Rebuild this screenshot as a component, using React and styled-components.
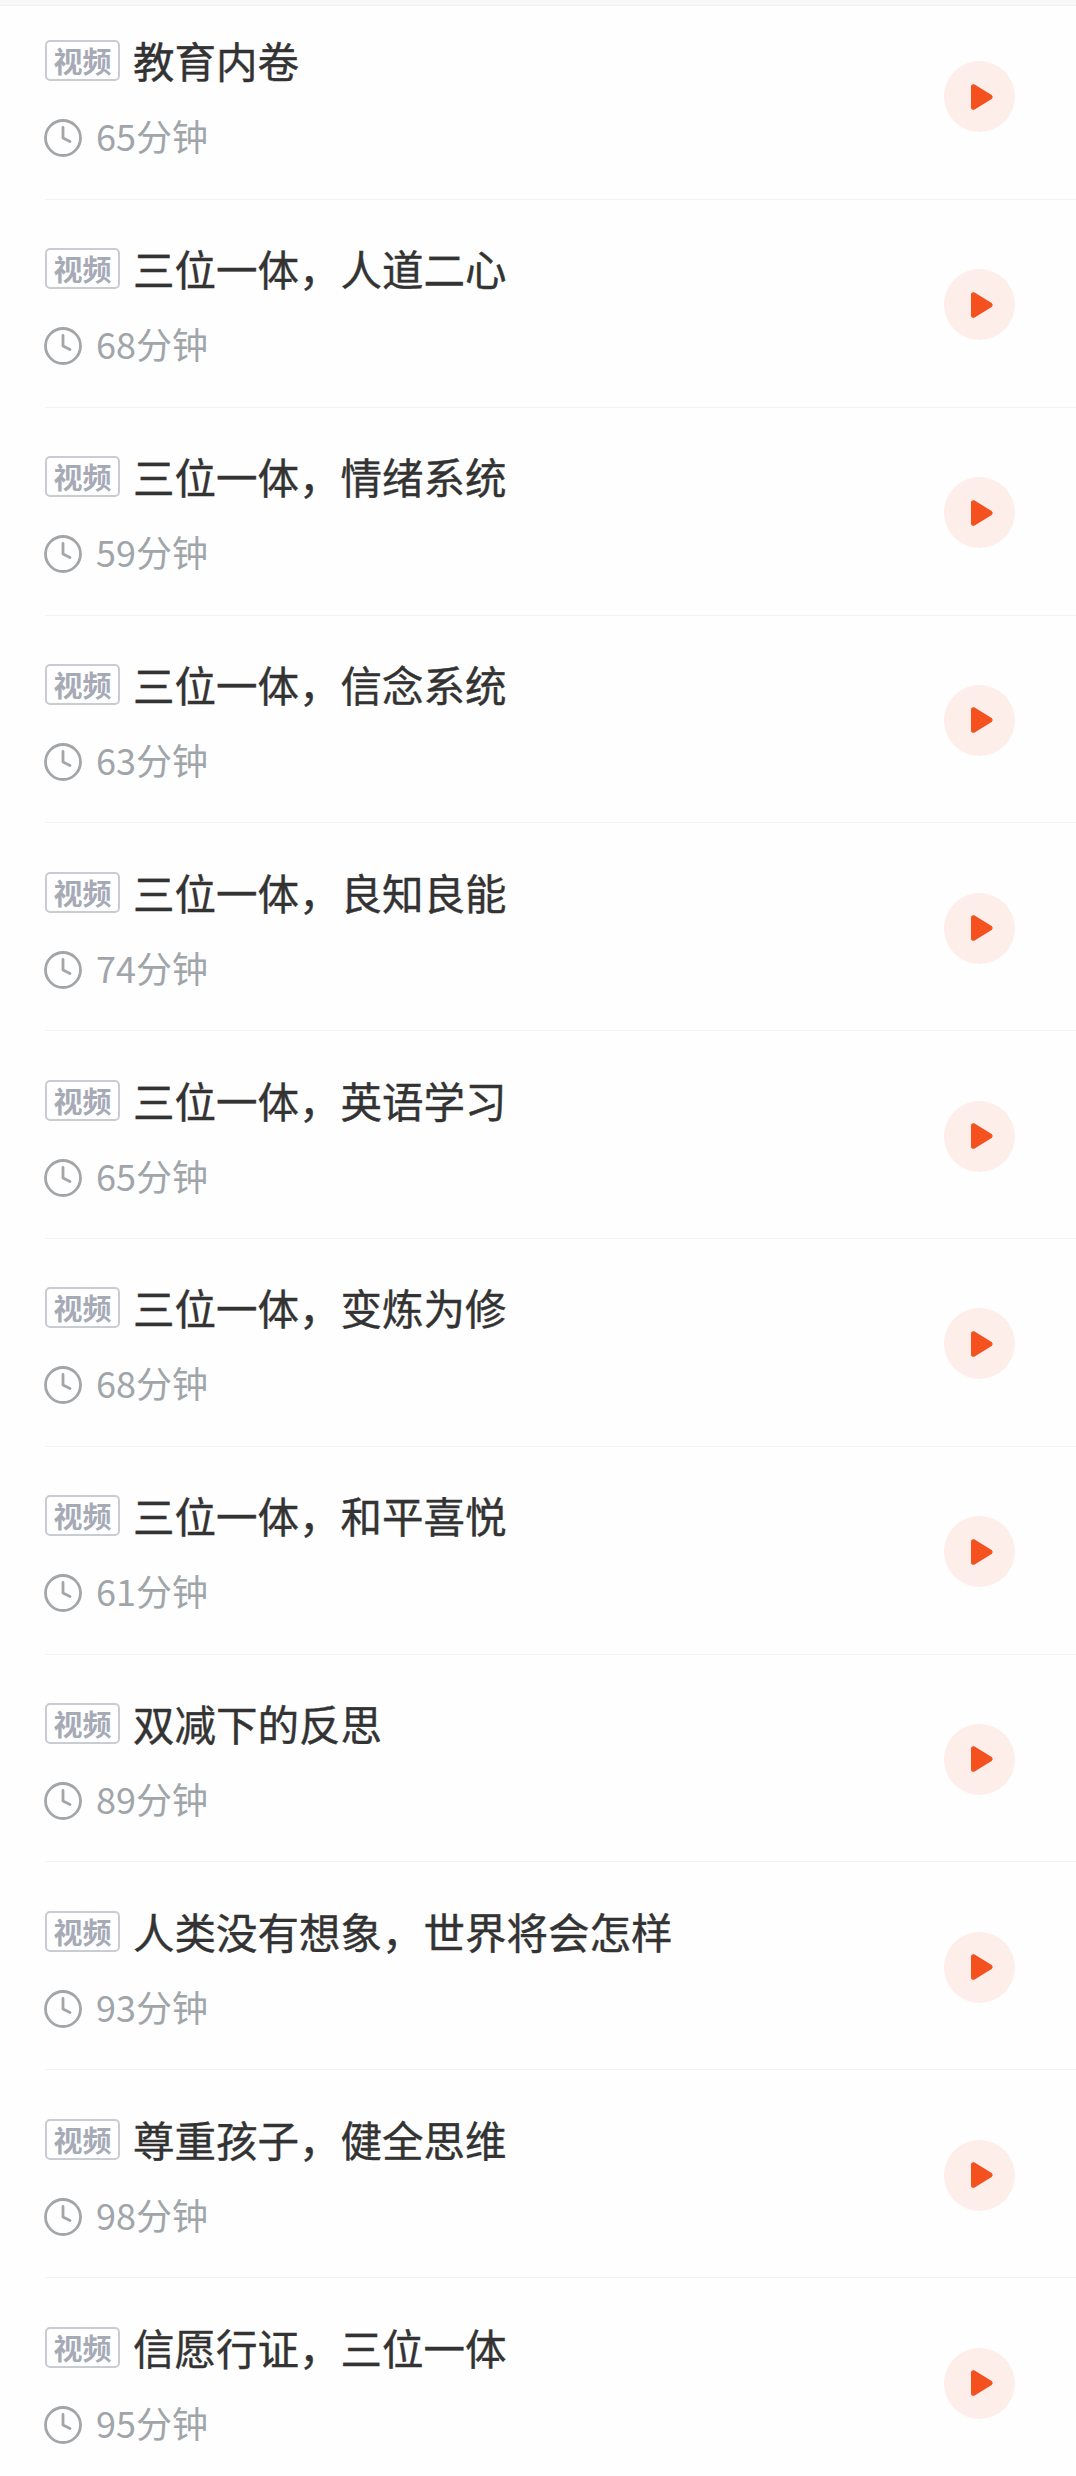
import React from "react";
import styled, { createGlobalStyle } from "styled-components";
import { Clock } from "lucide-react";

const GlobalStyle = createGlobalStyle`
  html, body {
    margin: 0;
    padding: 0;
    background: #fff;
  }
  body {
    font-family: "Noto Sans CJK SC", "Noto Sans", sans-serif;
  }
`;

const Page = styled.div`
  width: 1076px;
  height: 2476px;
  overflow: hidden;
  background: #fefefe;
`;

const TopStrip = styled.div`
  height: 5px;
  background: #f8f8f8;
  border-bottom: 1px solid #f2f2f2;
`;

const List = styled.ul`
  list-style: none;
  margin: 0;
  padding: 0;
`;

const Row = styled.li`
  box-sizing: border-box;
  height: ${(p) => (p.$first ? "194px" : "207.8px")};
  margin-left: 45px;
  padding: ${(p) => (p.$first ? "0 61px 12px 0" : "3px 61px 0 0")};
  display: flex;
  align-items: center;
  justify-content: space-between;
  border-bottom: ${(p) => (p.$last ? "none" : "1px solid #f3f3f3")};
`;

const Info = styled.div`
  display: flex;
  flex-direction: column;
  gap: 36px;
`;

const TitleLine = styled.div`
  display: flex;
  align-items: center;
  gap: 13px;
`;

const Tag = styled.span`
  box-sizing: border-box;
  width: 75px;
  height: 41px;
  display: flex;
  align-items: center;
  justify-content: center;
  border: 2px solid #c9ccd3;
  border-radius: 5px;
  color: #a6aab6;
  font-size: 29px;
  font-weight: 700;
  line-height: 1;
`;

const Title = styled.span`
  color: #333;
  font-size: 41.5px;
  line-height: 41px;
  -webkit-text-stroke: 0.4px #333;
`;

const Meta = styled.div`
  display: flex;
  align-items: center;
  gap: 15px;
  color: #a0a5aa;
  font-size: 36px;
  line-height: 36px;
`;

const ClockIcon = styled(Clock)`
  width: 42px;
  height: 42px;
  margin: 0 -3px -6px -3px;
  color: #a3a6a9;
`;

const PlayButton = styled.button`
  width: 71px;
  height: 71px;
  padding: 0 0 0 2px;
  border: none;
  border-radius: 50%;
  background: #fdeee9;
  display: flex;
  align-items: center;
  justify-content: center;
`;

const PlayIcon = () => (
  <svg width="26" height="28" viewBox="0 0 26 28">
    <path
      d="M3 3.5 C3 1.6 5 0.6 6.6 1.6 L23.6 12 C25 12.9 25 15.1 23.6 16 L6.6 26.4 C5 27.4 3 26.4 3 24.5 Z"
      fill="#f4511e"
    />
  </svg>
);

const lessons = [
  ["教育内卷", "65分钟"],
  ["三位一体，人道二心", "68分钟"],
  ["三位一体，情绪系统", "59分钟"],
  ["三位一体，信念系统", "63分钟"],
  ["三位一体，良知良能", "74分钟"],
  ["三位一体，英语学习", "65分钟"],
  ["三位一体，变炼为修", "68分钟"],
  ["三位一体，和平喜悦", "61分钟"],
  ["双减下的反思", "89分钟"],
  ["人类没有想象，世界将会怎样", "93分钟"],
  ["尊重孩子，健全思维", "98分钟"],
  ["信愿行证，三位一体", "95分钟"],
];

const App = () => {
  return (
    <Page>
      <GlobalStyle />
      <TopStrip />
      <List>
        {lessons.map(([title, time], i) => (
          <Row key={title} $first={i === 0} $last={i === lessons.length - 1}>
            <Info>
              <TitleLine>
                <Tag>视频</Tag>
                <Title>{title}</Title>
              </TitleLine>
              <Meta>
                <ClockIcon strokeWidth={1.6} />
                <span>{time}</span>
              </Meta>
            </Info>
            <PlayButton>
              <PlayIcon />
            </PlayButton>
          </Row>
        ))}
      </List>
    </Page>
  );
};

export default App;
